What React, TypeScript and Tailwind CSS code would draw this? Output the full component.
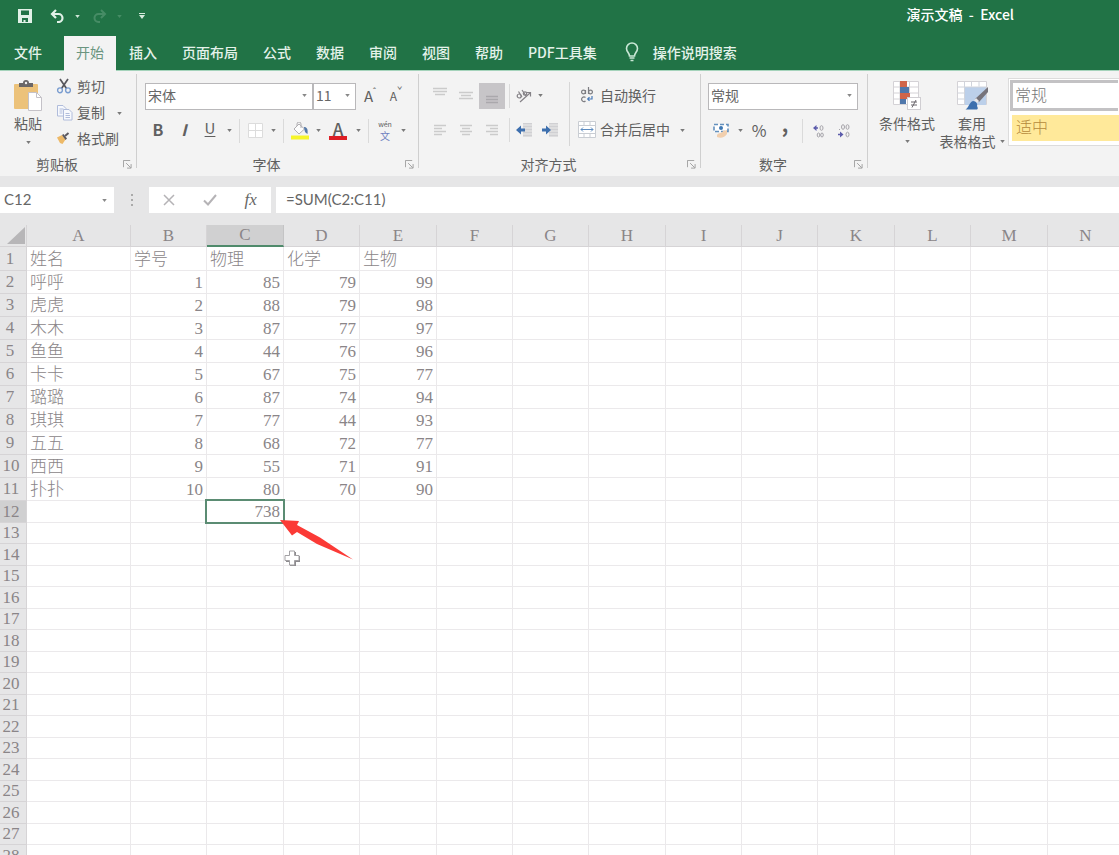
import { useState, type ReactNode } from "react";
import clsx from "clsx";

const TABS = ["插入", "页面布局", "公式", "数据", "审阅", "视图", "帮助", "PDF工具集"];

const COLUMNS = [
  { name: "A", width: "w-[104px]" },
  { name: "B", width: "w-[76px]" },
  { name: "C", width: "w-[77px]" },
  { name: "D", width: "w-[76px]" },
  { name: "E", width: "w-[77px]" },
  { name: "F", width: "w-[76px]" },
  { name: "G", width: "w-[76px]" },
  { name: "H", width: "w-[77px]" },
  { name: "I", width: "w-[76px]" },
  { name: "J", width: "w-[76px]" },
  { name: "K", width: "w-[77px]" },
  { name: "L", width: "w-[76px]" },
  { name: "M", width: "w-[77px]" },
  { name: "N", width: "w-[76px]" },
];

const DATA: (string | number)[][] = [
  ["姓名", "学号", "物理", "化学", "生物"],
  ["呼呼", 1, 85, 79, 99],
  ["虎虎", 2, 88, 79, 98],
  ["木木", 3, 87, 77, 97],
  ["鱼鱼", 4, 44, 76, 96],
  ["卡卡", 5, 67, 75, 77],
  ["璐璐", 6, 87, 74, 94],
  ["琪琪", 7, 77, 44, 93],
  ["五五", 8, 68, 72, 77],
  ["西西", 9, 55, 71, 91],
  ["扑扑", 10, 80, 70, 90],
  ["", "", 738, "", ""],
];

const ROW_COUNT = 28;

function rowHeight(n: number) {
  if (n === 1) return "h-6";
  if (n < 12) return "h-[23px]";
  return n % 2 === 0 ? "h-[22px]" : "h-[21px]";
}

// ---------------------------------------------------------------------------
// Small shared pieces
// ---------------------------------------------------------------------------
function Caret({ className }: { className?: string }) {
  return (
    <svg viewBox="0 0 6 4" className={clsx("w-[5px] h-[3px] fill-current", className)}>
      <path d="M0 0h6L3 4z" />
    </svg>
  );
}

function CaretButton({ label }: { label: string }) {
  return (
    <button
      type="button"
      aria-label={label}
      className="w-3 h-[26px] shrink-0 flex items-center justify-center text-[#7a7a7a]">
      <Caret />
    </button>
  );
}

function ToolButton({
  label,
  className,
  children,
}: {
  label: string;
  className?: string;
  children: ReactNode;
}) {
  return (
    <button
      type="button"
      aria-label={label}
      title={label}
      className={clsx(
        "h-[26px] shrink-0 flex items-center justify-center",
        className ?? "w-[26px]",
      )}>
      {children}
    </button>
  );
}

function Divider() {
  return <span className="w-px h-6 mx-1 shrink-0 bg-[#dadada]" />;
}

function RibbonSelect({
  label,
  options,
  className,
}: {
  label: string;
  options: string[];
  className: string;
}) {
  return (
    <div className={clsx("relative shrink-0", className)}>
      <select
        aria-label={label}
        className="w-full h-[27px] pl-0.5 pb-0.5 appearance-none bg-white border border-[#b9b8ba] text-[14px] leading-5 text-[#666] focus:outline-none">
        {options.map((o) => (
          <option key={o}>{o}</option>
        ))}
      </select>
      <Caret className="absolute right-1.5 top-3 pointer-events-none text-[#888]" />
    </div>
  );
}

function RibbonGroup({
  title,
  className,
  children,
}: {
  title?: string;
  className?: string;
  children: ReactNode;
}) {
  return (
    <section className={clsx("flex shrink-0", className)}>
      <div className="flex-1 min-w-0 flex flex-col">
        <div className="h-[78px] flex">{children}</div>
        {title && (
          <div className="h-6 flex items-center">
            <h2 className="flex-1 text-center text-[14px] leading-5">{title}</h2>
            <button
              type="button"
              aria-label={`${title}设置`}
              className="w-[22px] flex justify-center pl-1">
              <svg viewBox="0 0 10 10" className="w-[9px] h-[9px] stroke-[#9a9a9a] fill-none">
                <path d="M.5 8V.5H8M3.5 3.5l5 5M9 4.5V9H4.5" />
              </svg>
            </button>
          </div>
        )}
      </div>
      {title && <span className="w-px h-[94px] bg-[#cfcfcf]" />}
    </section>
  );
}

// ---------------------------------------------------------------------------
// Icons
// ---------------------------------------------------------------------------
function PasteIcon() {
  return (
    <svg viewBox="0 0 30 31" className="w-[30px] h-[31px]">
      <rect x="1" y="4" width="24" height="25" rx="1" fill="#ecc27a" />
      <path d="M6 3h4a3 3 0 0 1 6 0h4v4H6z" fill="#6a6768" />
      <circle cx="13" cy="3" r="1.2" fill="#f3f3f3" />
      <path d="M15.500 12.500h8l5 5v13h-13z" fill="#fff" stroke="#c4c2c8" />
      <path d="M23.500 12.500v5h5" fill="none" stroke="#c4c2c8" />
    </svg>
  );
}

function ScissorsIcon() {
  return (
    <svg viewBox="0 0 16 16" className="w-4 h-4 fill-none" strokeWidth="1.4">
      <path d="M4 1l6.500 9.500M12 1L5.500 10.500" stroke="#56565c" strokeWidth="1.7" />
      <circle cx="4" cy="12.300" r="2.400" stroke="#7a9dd0" />
      <circle cx="12" cy="12.300" r="2.400" stroke="#7a9dd0" />
    </svg>
  );
}

function CopyIcon() {
  return (
    <svg viewBox="0 0 17 17" className="w-[17px] h-[17px]" fill="#f7f9fd" stroke="#b0bcdb">
      <path d="M1.500 1.500h5.500l3 3v7.500h-8.500z" />
      <path d="M3.500 5h4M3.500 7h3M3.500 9h3" />
      <path d="M7.500 5.500h5.500l3 3v7.500h-8.500z" />
      <path d="M9.500 9.500h4M9.500 11.500h4.500M9.500 13.500h4.500" />
    </svg>
  );
}

function BrushIcon() {
  return (
    <svg viewBox="0 0 14 12" className="w-[14px] h-3">
      <path d="M1 5.500l5-2.500 3.500 4.500L6.500 12 4 11z" fill="#edb968" />
      <path d="M6 3l1.500-1 3.500 4.500L9.500 8z" fill="#5c5960" />
      <path d="M9 4l3.500-3" stroke="#5c5960" strokeWidth="2" />
    </svg>
  );
}

function BorderIcon() {
  return (
    <svg viewBox="0 0 15 15" className="w-[15px] h-[15px]" fill="#fff" stroke="#dcdcdc">
      <path d="M.5.5h14v14H.5zM7.500.5v14M.5 7.500h14" />
    </svg>
  );
}

function FillIcon() {
  return (
    <svg viewBox="0 0 20 18" className="w-5 h-[18px]">
      <path d="M4 7l5-5 5.500 5-5.500 5z" fill="#fdfdfd" stroke="#b0aeb2" />
      <path d="M7 4V2a2 2 0 0 1 4 0v4" fill="none" stroke="#b0aeb2" />
      <path d="M14 5c3 0 4 2 3.500 7C15 11 14.500 9 14 5z" fill="#5579a8" />
      <path d="M1 13.500h18v4H1z" fill="#f6f52a" />
    </svg>
  );
}

function AlignIcon({ lines, className }: { lines: string; className?: string }) {
  return (
    <svg
      viewBox="0 0 14 12"
      strokeWidth="1.5"
      className={clsx("w-[14px] h-3 fill-none", className ?? "stroke-[#cbcbcb]")}>
      <path d={lines} />
    </svg>
  );
}

function OrientationIcon() {
  return (
    <svg viewBox="0 0 16 14" className="w-4 h-[14px] fill-none stroke-[#858287]" strokeWidth="1.200">
      <circle cx="3.200" cy="7" r="2" />
      <path d="M2.500 2.500l3.500 5.500M6 1l4 6" />
      <circle cx="9" cy="4.500" r="1.700" />
      <path d="M4 13L14 4M10.500 3.500H14.500V7.500" />
    </svg>
  );
}

function IndentIcon({ increase }: { increase?: boolean }) {
  return (
    <svg viewBox="0 0 18 14" className="w-[18px] h-[14px]">
      <path d="M8 0h9v14H8z" fill="#dededf" />
      <path d="M8 .5h9M8 3.500h9M8 6.500h9M8 9.500h9M8 12.500h9" stroke="#d0d0d3" />
      {increase ? (
        <path d="M1 5.500h4V2.500L10 7l-5 4.500V8.500H1z" fill="#3d6fae" />
      ) : (
        <path d="M10 5.500H6V2.500L1 7l5 4.500V8.500h4z" fill="#3d6fae" />
      )}
    </svg>
  );
}

function WrapIcon() {
  return (
    <svg viewBox="0 0 14 16" className="w-[14px] h-4 fill-none stroke-[#7d7d82]" strokeWidth="1.200">
      <path d="M5.500 3v4M8.500 0v7" />
      <circle cx="3.500" cy="5" r="1.900" />
      <circle cx="10.500" cy="5" r="1.900" />
      <path d="M5.500 10.500a2.300 2.300 0 1 0 0 3.500" />
      <path d="M12 9v3H8M9.500 10.200L7.700 12l1.800 1.800" stroke="#4779b8" />
    </svg>
  );
}

function MergeIcon() {
  return (
    <svg viewBox="0 0 18 17" className="w-[18px] h-[17px]">
      <path
        d="M.5.5h17v16H.5zM.5 4.500h17M.5 12.500h17M6 .5v4M12 .5v4M6 12.500v4M12 12.500v4"
        fill="#fff"
        stroke="#c9cdd3"
      />
      <path d="M3 8.500h12M5 6.500l-2 2 2 2M13 6.500l2 2-2 2" fill="none" stroke="#5d8cc0" />
    </svg>
  );
}

function CurrencyIcon() {
  return (
    <svg viewBox="0 0 16 16" className="w-4 h-4">
      <rect x="1" y="1.500" width="14" height="7" fill="#fff" stroke="#6390bd" strokeWidth="1.600" strokeDasharray="4 2" />
      <circle cx="8" cy="5" r="2" fill="#3e78b3" />
      <path d="M4 12c2-3 5-1 6-4l4-1v4c-2 3-6 5-10 3z" fill="#f1cfae" />
    </svg>
  );
}

function DecimalIcon({ increase }: { increase?: boolean }) {
  return (
    <svg viewBox="0 0 14 14" className="w-[14px] h-[14px] fill-none stroke-[#a5a3a9]">
      {increase ? (
        <>
          <path d="M6 4H2" stroke="#5c5cab" strokeWidth="1.500" />
          <path d="M4.500 1v6L1 4z" fill="#5c5cab" stroke="none" />
          <ellipse cx="9.500" cy="4" rx="1.500" ry="2.300" />
          <ellipse cx="6.500" cy="11" rx="1.300" ry="2" />
          <ellipse cx="10" cy="11" rx="1.300" ry="2" />
        </>
      ) : (
        <>
          <path d="M2 5.500h1" />
          <ellipse cx="6" cy="3" rx="1.500" ry="2.300" />
          <ellipse cx="10.500" cy="3" rx="1.500" ry="2.300" />
          <path d="M1 10.500h4" stroke="#5c5cab" strokeWidth="1.500" />
          <path d="M3 7.500v6l3.500-3z" fill="#5c5cab" stroke="none" />
          <ellipse cx="10.500" cy="10.500" rx="1.500" ry="2.300" />
        </>
      )}
    </svg>
  );
}

function ConditionalIcon() {
  return (
    <svg viewBox="0 0 30 30" className="w-[30px] h-[30px]">
      <path d="M1.500 1.500h25v23h-25zM1.500 7h25M1.500 13h25M1.500 19h25M8 1.500v23M17.500 1.500v23" fill="#fff" stroke="#d4d2d6" />
      <path d="M8 1h7v6H8zM8 13h10v6H8z" fill="#d0654a" />
      <path d="M8 7h9v6H8zM8 19h6v5H8z" fill="#4f77ab" />
      <rect x="15.500" y="17.500" width="13" height="12" fill="#fff" stroke="#d0ced2" />
      <path d="M19 22h6M19 25h6M24 20l-4 7.500" stroke="#6a676c" fill="none" />
    </svg>
  );
}

function TableFormatIcon() {
  return (
    <svg viewBox="0 0 32 30" className="w-8 h-[30px]">
      <path d="M1.500 1.500h29v23h-29z" fill="#fff" stroke="#d4d2d6" />
      <path d="M9 7h21v18H9z" fill="#bcd0ea" />
      <path d="M1.500 7h29M1.500 13h7M1.500 19h7M8.500 1.500v23M15.500 1.500v5M23 1.500v5" stroke="#d0d4dc" fill="none" />
      <path d="M32 7v5l-9 10-4-3z" fill="#76737a" />
      <path d="M20 18l3 3-2 2-3-2z" fill="#e8e8ea" />
      <path d="M17 21c3 0 5 3 4 5 1 2 1 3 0 3.500H9.500c3-1 4-8 7.500-8.500z" fill="#3d70ae" />
    </svg>
  );
}

// ---------------------------------------------------------------------------
// Title bar and tabs
// ---------------------------------------------------------------------------
function TitleBar() {
  return (
    <header className="h-9 flex items-center text-white">
      <div className="flex-1 flex items-center pl-[18px] pb-1">
        <button type="button" aria-label="保存">
          <svg viewBox="0 0 14 14" className="w-[14px] h-[14px]">
            <path d="M0 0h14v14H0z" fill="#e2f1e8" />
            <path d="M3 1.500h8v4.500H3zM4 9h6v4H7.500v-2h-2v2H4z" fill="#217346" />
          </svg>
        </button>
        <button type="button" aria-label="撤消" className="ml-[18px]">
          <svg viewBox="0 0 15 14" className="w-[15px] h-[14px] fill-none stroke-[#e2f1e8]" strokeWidth="2.200">
            <path d="M6 1L2 5l4 4M2 5h6.500a4 4 0 0 1 0 8H7" />
          </svg>
        </button>
        <Caret className="ml-[10px] text-[#d0e6d8]" />
        <button type="button" aria-label="恢复" className="ml-3">
          <svg viewBox="0 0 15 14" className="w-[15px] h-[14px] fill-none stroke-[#468c65]" strokeWidth="2">
            <path d="M9 1l4 4-4 4M13 5H6.500a4 4 0 0 0 0 8H8" />
          </svg>
        </button>
        <Caret className="ml-[10px] text-[#468c65]" />
        <button type="button" aria-label="自定义快速访问工具栏" className="ml-[17px]">
          <svg viewBox="0 0 6 6" className="w-[6px] h-[6px] fill-[#d6eadd]">
            <path d="M0 0h6v1H0zM0 2h6L3 6z" />
          </svg>
        </button>
      </div>
      <h1 className="pr-[105px] pb-2 text-[14px] leading-5 font-medium whitespace-pre">
        演示文稿  -  Excel
      </h1>
    </header>
  );
}

function TabStrip() {
  return (
    <nav className="h-[34px] flex items-stretch text-[14px] leading-5 font-medium text-[#e4f2ea] whitespace-nowrap">
      <button type="button" className="w-16 pr-2 pb-[3px]">
        文件
      </button>
      <button
        type="button"
        className="relative -mb-px w-[52px] pb-1 bg-[#f3f3f3] text-[#6b9580] font-normal">
        开始
      </button>
      {TABS.map((tab) => (
        <button key={tab} type="button" className="pl-[13px] pr-3 pb-[3px]">
          {tab}
        </button>
      ))}
      <button type="button" className="pl-4 pb-[3px] flex items-center gap-3.5">
        <svg viewBox="0 0 14 20" className="w-[14px] h-5 fill-none stroke-[#c9e8d6]" strokeWidth="1.600">
          <path d="M4.500 14c0-3-3-4-3-7.500a5.500 5.500 0 0 1 11 0C12.500 10 9.500 11 9.500 14z" />
          <path d="M4.500 16h5M5.500 18.500h3" />
        </svg>
        操作说明搜索
      </button>
    </nav>
  );
}

// ---------------------------------------------------------------------------
// Ribbon
// ---------------------------------------------------------------------------
function ClipboardGroup() {
  return (
    <RibbonGroup title="剪贴板" className="w-[137px]">
      <button type="button" className="ml-3 w-8 shrink-0 flex flex-col items-center pt-1.5 whitespace-nowrap">
        <PasteIcon />
        <span className="text-[14px] leading-6">粘贴</span>
        <Caret className="mt-1.5 text-[#7a7a7a]" />
      </button>
      <div className="ml-3 flex flex-col text-[14px] leading-5">
        <button type="button" className="h-[26px] pb-0.5 flex items-center">
          <span className="w-[21px]"><ScissorsIcon /></span>
          剪切
        </button>
        <div className="h-[26px] flex items-center">
          <button type="button" className="pb-0.5 flex items-center">
            <span className="w-[21px]"><CopyIcon /></span>
            复制
          </button>
          <span className="w-2" />
          <CaretButton label="复制选项" />
        </div>
        <button type="button" className="h-[26px] pb-0.5 flex items-center">
          <span className="w-[21px]"><BrushIcon /></span>
          格式刷
        </button>
      </div>
    </RibbonGroup>
  );
}

function FontGroup() {
  return (
    <RibbonGroup title="字体" className="w-[282px]">
      <div className="pl-2 pt-2 flex flex-col gap-2">
        <div className="flex items-center">
          <RibbonSelect label="字体" options={["宋体", "黑体"]} className="w-[168px]" />
          <RibbonSelect label="字号" options={["11", "12", "14"]} className="w-[43px]" />
          <ToolButton label="增大字号" className="w-7 text-[15px]">
            A<sup className="text-[9px]">ˆ</sup>
          </ToolButton>
          <ToolButton label="减小字号" className="w-6 text-[12px]">
            A<sup className="text-[9px]">ˇ</sup>
          </ToolButton>
        </div>
        <div className="flex items-center">
          <ToolButton label="加粗" className="w-[26px] pb-1">
            <b className="text-[16px]">B</b>
          </ToolButton>
          <ToolButton label="倾斜" className="w-[26px] pb-1">
            <i className="text-[16px] font-bold">I</i>
          </ToolButton>
          <ToolButton label="下划线" className="w-[26px] pb-1">
            <u className="text-[15px] underline-offset-2">U</u>
          </ToolButton>
          <CaretButton label="下划线选项" />
          <Divider />
          <ToolButton label="边框" className="w-[23px]"><BorderIcon /></ToolButton>
          <CaretButton label="边框选项" />
          <Divider />
          <ToolButton label="填充颜色" className="w-6"><FillIcon /></ToolButton>
          <CaretButton label="填充颜色选项" />
          <ToolButton label="字体颜色" className="w-7">
            <span className="w-[18px] h-[18px] border-b-4 border-[#dd1f26] text-center text-[17px] leading-[14px] font-medium">
              A
            </span>
          </ToolButton>
          <CaretButton label="字体颜色选项" />
          <Divider />
          <ToolButton label="拼音" className="w-6">
            <span className="flex flex-col items-center">
              <span className="text-[7px] leading-[10px]">wén</span>
              <span className="text-[10px] leading-[14px] text-[#6f7fc0]">文</span>
            </span>
          </ToolButton>
          <CaretButton label="拼音选项" />
        </div>
      </div>
    </RibbonGroup>
  );
}

function AlignGroup() {
  return (
    <RibbonGroup title="对齐方式" className="w-[282px]">
      <div className="pl-2 pt-2 w-[150px] shrink-0 flex flex-col gap-2">
        <div className="h-[27px] flex items-center">
          <ToolButton label="顶端对齐" className="w-[26px] pb-2">
            <AlignIcon lines="M0 2.500h14M0 5.500h14M2 8.500h10" />
          </ToolButton>
          <ToolButton label="垂直居中">
            <AlignIcon lines="M0 2.500h14M2 5.500h10M0 8.500h14" />
          </ToolButton>
          <ToolButton label="底端对齐" className="w-[26px] bg-[#c7c5c8] pt-2">
            <AlignIcon lines="M1 2.500h12M1 5.500h12M1 8.500h12" className="stroke-[#aaa8ac]" />
          </ToolButton>
          <Divider />
          <ToolButton label="方向" className="w-5"><OrientationIcon /></ToolButton>
          <CaretButton label="方向选项" />
        </div>
        <div className="flex items-center">
          <ToolButton label="左对齐">
            <AlignIcon lines="M1 1.500h12M1 4.500h8M1 7.500h12M1 10.500h8" />
          </ToolButton>
          <ToolButton label="居中">
            <AlignIcon lines="M1 1.500h12M3 4.500h8M1 7.500h12M3 10.500h8" />
          </ToolButton>
          <ToolButton label="右对齐">
            <AlignIcon lines="M1 1.500h12M5 4.500h8M1 7.500h12M5 10.500h8" />
          </ToolButton>
          <Divider />
          <ToolButton label="减少缩进量" className="w-5"><IndentIcon /></ToolButton>
          <ToolButton label="增加缩进量" className="w-8"><IndentIcon increase /></ToolButton>
        </div>
      </div>
      <span className="w-px h-16 mt-2 shrink-0 bg-[#d6d6d6]" />
      <div className="pl-2 pt-2 flex flex-col gap-2 text-[14px] leading-5 whitespace-nowrap">
        <button type="button" className="h-[27px] pb-0.5 flex items-center">
          <span className="w-[22px] flex pl-0.5"><WrapIcon /></span>
          自动换行
        </button>
        <div className="flex items-center">
          <button type="button" className="pb-0.5 flex items-center">
            <span className="w-[22px]"><MergeIcon /></span>
            合并后居中
          </button>
          <span className="w-1.5" />
          <CaretButton label="合并选项" />
        </div>
      </div>
    </RibbonGroup>
  );
}

function NumberGroup() {
  return (
    <RibbonGroup title="数字" className="w-[167px]">
      <div className="pl-[7px] pt-2 flex flex-col gap-2">
        <RibbonSelect label="数字格式" options={["常规", "数值", "货币"]} className="w-[150px]" />
        <div className="flex items-center">
          <ToolButton label="会计数字格式"><CurrencyIcon /></ToolButton>
          <CaretButton label="会计数字格式选项" />
          <ToolButton label="百分比样式" className="w-[26px] pb-0.5">
            <span className="text-[16px]">%</span>
          </ToolButton>
          <ToolButton label="千位分隔样式">
            <span className="text-[20px] leading-[10px] pb-3.5 font-bold">,</span>
          </ToolButton>
          <Divider />
          <ToolButton label="增加小数位数" className="w-6"><DecimalIcon increase /></ToolButton>
          <ToolButton label="减少小数位数"><DecimalIcon /></ToolButton>
        </div>
      </div>
    </RibbonGroup>
  );
}

function StylesGroup() {
  return (
    <RibbonGroup className="flex-1 min-w-[240px]">
      <button type="button" className="ml-2.5 w-[58px] shrink-0 flex flex-col items-center pt-1.5 text-[14px] whitespace-nowrap">
        <ConditionalIcon />
        <span className="leading-[26px]">条件格式</span>
        <Caret className="mt-1 text-[#7a7a7a]" />
      </button>
      <button type="button" className="ml-[3px] w-[66px] shrink-0 flex flex-col items-center pt-1.5 text-[14px] whitespace-nowrap">
        <TableFormatIcon />
        <span className="leading-[26px] h-[22px]">套用</span>
        <span className="leading-[18px] flex items-center gap-1">
          表格格式
          <Caret className="text-[#7a7a7a]" />
        </span>
      </button>
      <div className="ml-[3px] mt-1 flex-1 h-[68px] p-px bg-white border border-r-0 border-[#dcdcdc] overflow-hidden text-[16px] font-light">
        <button type="button" className="w-full h-[31px] pb-1 pl-0.5 border-[3px] border-r-0 border-[#c3c2c4] text-left leading-5 text-[#777]">
          常规
        </button>
        <button type="button" className="mt-1 ml-0.5 w-full h-[26px] pb-1 pl-1 bg-[#ffe99a] text-left leading-5 text-[#b58a3c]">
          适中
        </button>
      </div>
    </RibbonGroup>
  );
}

// ---------------------------------------------------------------------------
// Formula bar
// ---------------------------------------------------------------------------
function FormulaBar() {
  const [formula, setFormula] = useState("=SUM(C2:C11)");

  return (
    <div className="pt-[11px] pb-3 flex items-center font-['Lato','Noto_Sans_CJK_SC',sans-serif] text-[15px] text-[#666]">
      <div className="relative w-[114px] shrink-0">
        <input
          aria-label="名称框"
          defaultValue="C12"
          className="w-full h-[26px] pl-1 pb-0.5 bg-white focus:outline-none"
        />
        <Caret className="absolute right-1.5 top-3 w-[7px] h-1 text-[#888] pointer-events-none" />
      </div>
      <span className="w-[35px] shrink-0 flex flex-col items-center gap-[3px]">
        <i className="size-0.5 bg-[#aaa]" />
        <i className="size-0.5 bg-[#aaa]" />
        <i className="size-0.5 bg-[#aaa]" />
      </span>
      <div className="w-[122px] h-[26px] shrink-0 bg-white flex">
        <button type="button" aria-label="取消" className="flex-1 flex items-center justify-center">
          <svg viewBox="0 0 12 12" className="w-3 h-3 stroke-[#b5b3b6]" strokeWidth="1.500">
            <path d="M1 1l10 10M11 1L1 11" />
          </svg>
        </button>
        <button type="button" aria-label="输入" className="flex-1 flex items-center justify-center">
          <svg viewBox="0 0 14 12" className="w-[14px] h-3 fill-none stroke-[#b5b3b6]" strokeWidth="2">
            <path d="M1 6.500L5 10.500 13 1" />
          </svg>
        </button>
        <button
          type="button"
          aria-label="插入函数"
          className="flex-1 font-['Liberation_Serif',serif] italic text-[17px] leading-[26px] text-[#666]">
          fx
        </button>
      </div>
      <input
        aria-label="编辑栏"
        value={formula}
        onChange={(e) => setFormula(e.target.value)}
        className="ml-[5px] flex-1 min-w-0 h-[26px] pl-2.5 pb-0.5 bg-white focus:outline-none"
      />
    </div>
  );
}

// ---------------------------------------------------------------------------
// Sheet
// ---------------------------------------------------------------------------
function Sheet() {
  return (
    <div className="relative flex-1 min-h-0 overflow-hidden bg-white">
      <table className="w-[1124px] table-fixed border-separate border-spacing-0 font-['Liberation_Serif','Noto_Sans_CJK_SC',serif] text-[17px] leading-5 text-[#8a8588] font-light">
        <colgroup>
          <col className="w-[27px]" />
          {COLUMNS.map((c) => (
            <col key={c.name} className={c.width} />
          ))}
        </colgroup>
        <thead>
          <tr className="h-[22px] bg-[#e6e6e7]">
            <th className="p-0 border-r border-b border-[#d6d4d6]">
              <svg viewBox="0 0 18 17" className="ml-auto mr-px w-[18px] h-[17px] fill-[#b7b6b8]">
                <path d="M18 0v17H0z" />
              </svg>
            </th>
            {COLUMNS.map((c) => (
              <th
                key={c.name}
                scope="col"
                className={clsx(
                  "p-0 border-r border-b font-normal",
                  c.name === "C"
                    ? "bg-[#d0d0d1] border-r-[#c4c4c5] border-b-2 border-b-[#4f8a6b]"
                    : "border-[#d6d4d6]",
                )}>
                {c.name}
              </th>
            ))}
          </tr>
        </thead>
        <tbody>
          {Array.from({ length: ROW_COUNT }, (_, i) => i + 1).map((n) => (
            <tr key={n} className={rowHeight(n)}>
              <th
                scope="row"
                className={clsx(
                  "p-0 border-r border-b border-[#d6d4d6] font-normal",
                  n < 10 ? "pr-1.5" : "pr-1",
                  n === 12 ? "bg-[#d0d0d1]" : "bg-[#e6e6e7]",
                )}>
                {n}
              </th>
              {COLUMNS.map((c, col) => {
                const value = DATA[n - 1]?.[col];
                const selected = n === 12 && c.name === "C";
                return (
                  <td
                    key={c.name}
                    className={clsx(
                      "p-0 px-[3px] border-r border-b border-[#ebe9eb] whitespace-nowrap",
                      typeof value === "number" && "text-right",
                      n < 12 && "pt-0.5",
                      selected && "relative",
                    )}>
                    {value}
                    {selected && (
                      <span className="absolute -inset-0.5 border-2 border-[#5b8c73]" />
                    )}
                  </td>
                );
              })}
            </tr>
          ))}
        </tbody>
      </table>

      {/* callout arrow and mouse pointer over the cells */}
      <svg viewBox="0 0 74 42" className="absolute left-[280px] top-[294px] w-[74px] h-[42px] fill-[#fb3a36] pointer-events-none">
        <path d="M0 1l19 1-2 4 23 12.500L73 40.500 37 25 17 13l-5 3.500z" />
      </svg>
      <svg viewBox="0 0 18 18" className="absolute left-[283px] top-[324px] w-[18px] h-[18px] pointer-events-none">
        <path d="M7 3h6v4h4v6h-4v4H7v-4H3V7h4z" fill="#8d8b8e" />
        <path d="M6.500 2h5v4.500H16v5h-4.500V16h-5v-4.500H2v-5h4.500z" fill="#fff" stroke="#a3a1a4" />
      </svg>
    </div>
  );
}

export default function App() {
  return (
    <div className="h-screen overflow-hidden flex flex-col bg-[#e6e6e7] font-['Noto_Sans_CJK_SC',sans-serif] text-[#606060]">
      <div className="relative z-10 shrink-0 bg-[#217346]">
        <TitleBar />
        <TabStrip />
      </div>
      <div className="shrink-0 flex pt-[3px] border-t border-[#a5d3bb] bg-[#f3f3f3] overflow-hidden">
        <ClipboardGroup />
        <FontGroup />
        <AlignGroup />
        <NumberGroup />
        <StylesGroup />
      </div>
      <FormulaBar />
      <Sheet />
    </div>
  );
}
